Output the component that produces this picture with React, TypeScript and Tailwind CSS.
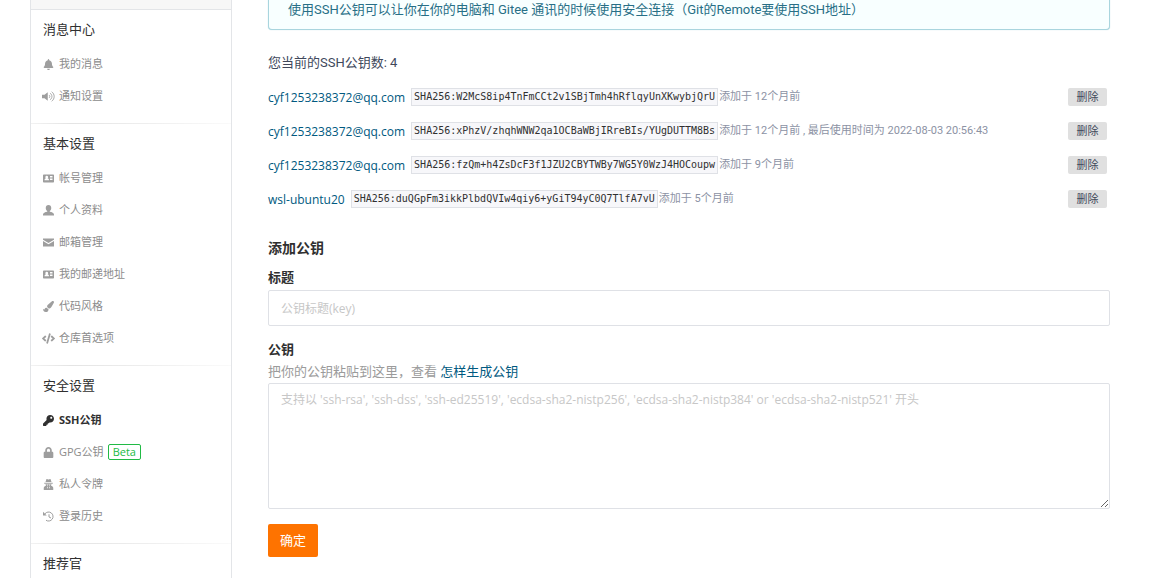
import React from 'react';
import { FaBell, FaCode, FaKey, FaLock, FaPaintBrush } from 'react-icons/fa';

interface IconProps {
  className?: string;
}

interface MenuItem {
  label: string;
  Icon: React.ComponentType<IconProps>;
  active?: boolean;
  badge?: string;
}

interface MenuSection {
  title: string;
  items: MenuItem[];
}

interface SshKey {
  title: string;
  fingerprint: string;
  meta: string;
}

const VolumeIcon: React.FC<IconProps> = ({ className }) => (
  <svg className={className} viewBox="0 0 26 22" fill="none" stroke="currentColor" strokeWidth="1.8" strokeLinecap="round">
    <path d="M0 7.500h5l6.500-5v17l-6.500-5H0z" fill="currentColor" stroke="none" />
    <path d="M14.500 8.500c1.800 1.200 1.800 3.800 0 5M17 5c4 2.500 4 9.500 0 12M20 2c6 4 6 14 0 18" />
  </svg>
);

const CardIcon: React.FC<IconProps> = ({ className }) => (
  <svg className={className} viewBox="0 0 22 22" fill="currentColor" fillRule="evenodd">
    <path d="M1.500 3h19A1.500 1.500 0 0 1 22 4.500v13a1.500 1.500 0 0 1-1.500 1.500h-19A1.500 1.500 0 0 1 0 17.500v-13A1.500 1.500 0 0 1 1.500 3zM7.500 5.500a2.700 2.700 0 0 0-1.500 5c-2 .5-3 1.700-3 4h9c0-2.300-1-3.500-3-4a2.700 2.700 0 0 0-1.500-5zM14 6v3h5V6zM14 11v3h5v-3z" />
  </svg>
);

const PersonIcon: React.FC<IconProps> = ({ className }) => (
  <svg className={className} viewBox="0 0 22 22" fill="currentColor">
    <path d="M11 0c3.500 0 5.500 2.500 5.500 6 0 2.600-1.200 5-3 6.300v1.200c4.500.6 8.500 2.300 8.500 5.500v2H0v-2c0-3.200 4-4.900 8.500-5.500v-1.200C6.700 11 5.500 8.600 5.500 6c0-3.500 2-6 5.500-6z" />
  </svg>
);

const MailIcon: React.FC<IconProps> = ({ className }) => (
  <svg className={className} viewBox="0 0 22 22" fill="currentColor">
    <path d="M0 3h22v2.500l-11 6.500-11-6.500zM0 8l11 6.500L22 8v11H0z" />
  </svg>
);

const SpyIcon: React.FC<IconProps> = ({ className }) => (
  <svg className={className} viewBox="0 0 22 22" fill="currentColor" fillRule="evenodd">
    <path d="M7 0c2 0 2.500 1 4 1s2-1 4-1l2 6H5zM2.500 7.500h17v2h-17zM5 10.500h12l-1 3c3 .5 4.500 2.500 4.500 5V22h-19v-3.500c0-2.500 1.500-4.500 4.500-5zM8 11.500v1.500h2v-1.500zM12 11.500v1.500h2v-1.500zM8 15l1.500 5 .5-4zM14 15l-2 1 .5 4z" />
  </svg>
);

const HistoryIcon: React.FC<IconProps> = ({ className }) => (
  <svg className={className} viewBox="0 0 22 22" fill="none" stroke="currentColor" strokeWidth="2">
    <path d="M4 5.500a9 9 0 1 1 2 13M12 6.500V12l4 2" />
    <path d="M0 1.500V9h7.500z" fill="currentColor" stroke="none" />
  </svg>
);

const sections: MenuSection[] = [
  {
    title: '消息中心',
    items: [
      { label: '我的消息', Icon: FaBell },
      { label: '通知设置', Icon: VolumeIcon },
    ],
  },
  {
    title: '基本设置',
    items: [
      { label: '帐号管理', Icon: CardIcon },
      { label: '个人资料', Icon: PersonIcon },
      { label: '邮箱管理', Icon: MailIcon },
      { label: '我的邮递地址', Icon: CardIcon },
      { label: '代码风格', Icon: FaPaintBrush },
      { label: '仓库首选项', Icon: FaCode },
    ],
  },
  {
    title: '安全设置',
    items: [
      { label: 'SSH公钥', Icon: FaKey, active: true },
      { label: 'GPG公钥', Icon: FaLock, badge: 'Beta' },
      { label: '私人令牌', Icon: SpyIcon },
      { label: '登录历史', Icon: HistoryIcon },
    ],
  },
  { title: '推荐官', items: [] },
];

const sshKeys: SshKey[] = [
  {
    title: 'cyf1253238372@qq.com',
    fingerprint: 'SHA256:W2McS8ip4TnFmCCt2v1SBjTmh4hRflqyUnXKwybjQrU',
    meta: '添加于 12个月前',
  },
  {
    title: 'cyf1253238372@qq.com',
    fingerprint: 'SHA256:xPhzV/zhqhWNW2qa1OCBaWBjIRreBIs/YUgDUTTM8Bs',
    meta: '添加于 12个月前 , 最后使用时间为 2022-08-03 20:56:43',
  },
  {
    title: 'cyf1253238372@qq.com',
    fingerprint: 'SHA256:fzQm+h4ZsDcF3f1JZU2CBYTWBy7WG5Y0WzJ4HOCoupw',
    meta: '添加于 9个月前',
  },
  {
    title: 'wsl-ubuntu20',
    fingerprint: 'SHA256:duQGpFm3ikkPlbdQVIw4qiy6+yGiT94yC0Q7TlfA7vU',
    meta: '添加于 5个月前',
  },
];

const SidebarItem: React.FC<{ item: MenuItem }> = ({ item }) => {
  const { label, Icon, active, badge } = item;
  return (
    <li>
      <a
        href="#"
        className={`flex h-8 items-center gap-1 pl-[11px] text-[11px] ${active ? 'font-bold text-[#303030]' : 'text-[#8c8c8c]'}`}
      >
        <Icon className={`h-[11px] w-[13px] shrink-0 ${active ? 'text-[#303030]' : 'text-[#9e9e9e]'}`} />
        <span>{label}</span>
        {badge && (
          <span className="flex h-4 items-center rounded-xs border border-[#21ba45] px-1 text-[#21ba45]">{badge}</span>
        )}
      </a>
    </li>
  );
};

const Sidebar: React.FC = () => (
  <nav className="w-[202px] shrink-0 border-x border-[#e3e5e8] font-['Open_Sans','Noto_Sans_CJK_SC',sans-serif]">
    <div className="h-[9px] bg-[#f7f7f7]" />
    {sections.map((section, index) => (
      <section key={section.title} className="pb-[11px]">
        <div
          className={`h-px ${index === 0 ? 'bg-[#e3e5e8]' : 'bg-linear-to-r from-[#f2f2f2] via-[#e4e4e4] via-20% to-[#fafafa]'}`}
        />
        <h2 className="flex h-[38px] items-center pl-3 text-[13px]">{section.title}</h2>
        <ul>
          {section.items.map((item) => (
            <SidebarItem key={item.label} item={item} />
          ))}
        </ul>
      </section>
    ))}
  </nav>
);

const KeyRow: React.FC<{ sshKey: SshKey }> = ({ sshKey }) => (
  <li className="flex h-[34px] items-center justify-between pr-[3px]">
    <div className="flex items-center whitespace-nowrap">
      <a href="#" className="mr-1.5 pt-0.5 font-['Open_Sans',sans-serif] text-xs text-[#005980]">{sshKey.title}</a>
      <code className="mr-px border border-[#dfe1e6] bg-[#f7f7fa] px-0.5 font-['DejaVu_Sans_Mono',monospace] text-[10px] leading-4 text-[#303030]">
        {sshKey.fingerprint}
      </code>
      <span className="text-[11px] text-[#8c92a4]">{sshKey.meta}</span>
    </div>
    <button type="button" className="h-[18px] w-[39px] rounded-xs bg-[#e0e0e0] text-[11px] leading-5 text-[#40485b]">
      删除
    </button>
  </li>
);

const App: React.FC = () => (
  <div className="flex min-h-screen gap-9 bg-white pr-[43px] pl-[30px] font-['Roboto','Noto_Sans_CJK_SC',sans-serif] text-[13px] leading-5 text-[#303030]">
    <Sidebar />
    <main className="min-w-0 flex-1 pb-5">
      <div className="h-[30px] rounded-b-[4px] border border-t-0 border-[#a9d5de] bg-[#f8ffff] pl-[19px] leading-5 text-[#276f86] shadow-[0_0_1px_#a9d5de]">
        使用SSH公钥可以让你在你的电脑和 Gitee 通讯的时候使用安全连接（Git的Remote要使用SSH地址）
      </div>
      <p className="mt-[23px] text-[#40485b]">您当前的SSH公钥数: {sshKeys.length}</p>
      <ul className="mt-[7px]">
        {sshKeys.map((sshKey) => (
          <KeyRow key={sshKey.fingerprint} sshKey={sshKey} />
        ))}
      </ul>
      <h3 className="mt-[22px] text-[14px] font-bold">添加公钥</h3>
      <form onSubmit={(e) => e.preventDefault()}>
        <label htmlFor="key-title" className="mt-2.5 block font-bold">标题</label>
        <input
          id="key-title"
          type="text"
          placeholder="公钥标题(key)"
          className="mt-0.5 block h-9 w-full rounded-xs border border-[#dfe1e6] px-3 font-['Open_Sans','Noto_Sans_CJK_SC',sans-serif] text-xs outline-none placeholder:text-[#c7c7c7]"
        />
        <label htmlFor="key-content" className="mt-3.5 block font-bold">公钥</label>
        <p className="mt-0.5 text-[#9b9b9b]">
          把你的公钥粘贴到这里，查看 <a href="#" className="text-[#005980]">怎样生成公钥</a>
        </p>
        <textarea
          id="key-content"
          placeholder="支持以 'ssh-rsa', 'ssh-dss', 'ssh-ed25519', 'ecdsa-sha2-nistp256', 'ecdsa-sha2-nistp384' or 'ecdsa-sha2-nistp521' 开头"
          className="mt-px block h-[126px] w-full resize-y rounded-xs border border-[#dfe1e6] px-3 py-1.5 font-['Open_Sans','Noto_Sans_CJK_SC',sans-serif] text-xs leading-5 outline-none placeholder:text-[#c7c7c7]"
        />
        <button type="submit" className="mt-[15px] h-[33px] rounded-xs bg-[#fe7300] px-3 text-white">
          确定
        </button>
      </form>
    </main>
  </div>
);

export default App;
